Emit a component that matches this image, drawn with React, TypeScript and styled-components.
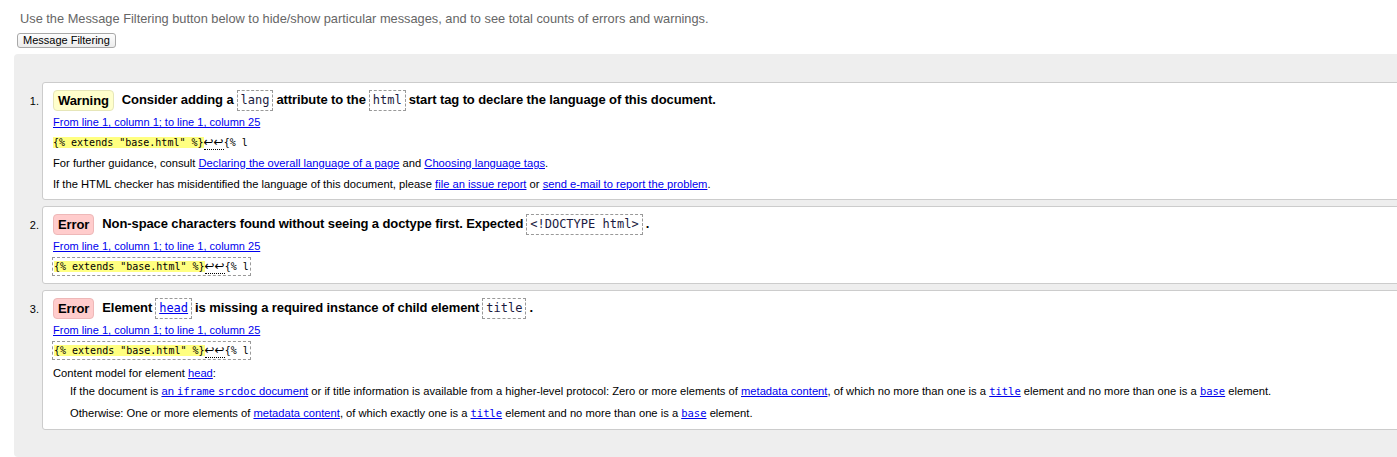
import React from "react";
import styled, { createGlobalStyle } from "styled-components";

const Global = createGlobalStyle`
  html, body { margin: 0; padding: 0; overflow: hidden; background: #fff; }
  body { font-family: "Liberation Sans", Arial, sans-serif; color: #000; }
`;

const Page = styled.div`
  padding: 11px 0 0 14px;
`;

const Intro = styled.p`
  margin: 0 0 0 6px;
  font-size: 12.8px;
  line-height: 16px;
  color: #666;
`;

const FilterButton = styled.button`
  margin: 6px 0 0 3px;
  font-family: "Liberation Sans", Arial, sans-serif;
  font-size: 11px;
  line-height: 13px;
  padding: 0 5px;
  border: 1px solid #a8a8a8;
  border-radius: 3px;
  background: linear-gradient(#fdfdfd, #ececec);
  color: #000;
`;

const Panel = styled.div`
  margin-top: 6px;
  width: 1420px;
  background: #eee;
  border-radius: 4px;
  padding: 28px 0 27px 28px;
`;

const List = styled.ol`
  margin: 0;
  padding: 0;
  display: flex;
  flex-direction: column;
  gap: 6px;
`;

const Item = styled.li`
  background: #fff;
  border: 1px solid #ccc;
  border-radius: 3px;
  padding: 5px 10px 8px 10px;
  font-size: 11.2px;
  &::marker {
    font-size: 11px;
  }
`;

const Title = styled.p`
  margin: 0;
  font-size: 13px;
  letter-spacing: -0.1px;
  font-weight: bold;
  line-height: 24px;
  display: flex;
  align-items: center;
  white-space: nowrap;
`;

const Badge = styled.strong<{ $kind: "warning" | "error" }>`
  display: inline-block;
  padding: 1px 4px;
  margin-right: 8px;
  border-radius: 4px;
  line-height: 17px;
  background: ${(p) => (p.$kind === "warning" ? "#ffffcc" : "#ffcccc")};
  border: 1px solid ${(p) => (p.$kind === "warning" ? "#e6e6b8" : "#eeb8b8")};
`;

const Code = styled.code`
  display: inline-block;
  font-family: "DejaVu Sans Mono", monospace;
  font-weight: normal;
  font-size: 12px;
  letter-spacing: 0;
  line-height: 15px;
  padding: 2px 3px;
  margin: 0 3px;
  border: 1px dashed #999;
  color: #1a1a40;
`;

const Link = styled.a`
  color: #0000ee;
  text-decoration: underline;
`;

const Location = styled.p`
  margin: 3px 0 0 0;
  font-size: 11px;
  line-height: 14px;
`;

const Extract = styled.p<{ $boxed?: boolean }>`
  margin: ${(p) => (p.$boxed ? "4px 0 -1px -1px" : "6px 0 0 0")};
  display: block;
  width: fit-content;
  font-family: "DejaVu Sans Mono", monospace;
  font-size: 10px;
  line-height: 14px;
  padding: ${(p) => (p.$boxed ? "1px" : "0")};
  border: ${(p) => (p.$boxed ? "1px dashed #999" : "none")};
`;

const Mark = styled.mark`
  background: #ffff80;
  color: #000;
`;

const Lf = styled.span`
  font-family: "DejaVu Sans", sans-serif;
  font-size: 12px;
  border-bottom: 1px dotted #000;
`;

const Para = styled.p<{ $gap?: number }>`
  margin: ${(p) => p.$gap ?? 6}px 0 0 0;
  line-height: 14px;
`;

const Details = styled.dl`
  margin: 7px 0 1px 0;
`;

const Term = styled.dt`
  line-height: 14px;
`;

const Def = styled.dd<{ $gap: number }>`
  margin: ${(p) => p.$gap}px 0 0 17px;
  line-height: 14px;
`;

const MonoLink = styled(Link)`
  font-family: "DejaVu Sans Mono", monospace;
  font-size: 10.5px;
`;

const ExtractBody = () => (
  <>
    <Mark>{'{% extends "base.html" %}'}</Mark>
    <Lf>↩↩</Lf>
    {"{% l"}
  </>
);

export default function App() {
  return (
    <>
      <Global />
      <Page>
        <Intro>
          Use the Message Filtering button below to hide/show particular messages, and to see total counts of errors
          and warnings.
        </Intro>
        <FilterButton>Message Filtering</FilterButton>
        <Panel>
          <List>
            <Item>
              <Title>
                <Badge $kind="warning">Warning</Badge>
                Consider adding a<Code>lang</Code>attribute to the<Code>html</Code>start tag to declare the language of
                this document.
              </Title>
              <Location>
                <Link href="#">From line 1, column 1; to line 1, column 25</Link>
              </Location>
              <Extract>
                <ExtractBody />
              </Extract>
              <Para $gap={6}>
                For further guidance, consult <Link href="#">Declaring the overall language of a page</Link> and{" "}
                <Link href="#">Choosing language tags</Link>.
              </Para>
              <Para $gap={7}>
                If the HTML checker has misidentified the language of this document, please{" "}
                <Link href="#">file an issue report</Link> or <Link href="#">send e-mail to report the problem</Link>.
              </Para>
            </Item>
            <Item>
              <Title>
                <Badge $kind="error">Error</Badge>
                Non-space characters found without seeing a doctype first. Expected<Code>{"<!DOCTYPE html>"}</Code>.
              </Title>
              <Location>
                <Link href="#">From line 1, column 1; to line 1, column 25</Link>
              </Location>
              <Extract $boxed>
                <ExtractBody />
              </Extract>
            </Item>
            <Item>
              <Title>
                <Badge $kind="error">Error</Badge>
                Element
                <Code>
                  <Link href="#">head</Link>
                </Code>
                is missing a required instance of child element<Code>title</Code>.
              </Title>
              <Location>
                <Link href="#">From line 1, column 1; to line 1, column 25</Link>
              </Location>
              <Extract $boxed>
                <ExtractBody />
              </Extract>
              <Details>
                <Term>
                  Content model for element <Link href="#">head</Link>:
                </Term>
                <Def $gap={4}>
                  If the document is{" "}
                  <Link href="#">
                    an <MonoLink as="span">iframe</MonoLink> <MonoLink as="span">srcdoc</MonoLink> document
                  </Link>{" "}
                  or if title information is available from a higher-level protocol: Zero or more elements of{" "}
                  <Link href="#">metadata content</Link>, of which no more than one is a{" "}
                  <MonoLink href="#">title</MonoLink> element and no more than one is a <MonoLink href="#">base</MonoLink>{" "}
                  element.
                </Def>
                <Def $gap={8}>
                  Otherwise: One or more elements of <Link href="#">metadata content</Link>, of which exactly one is a{" "}
                  <MonoLink href="#">title</MonoLink> element and no more than one is a <MonoLink href="#">base</MonoLink>{" "}
                  element.
                </Def>
              </Details>
            </Item>
          </List>
        </Panel>
      </Page>
    </>
  );
}
